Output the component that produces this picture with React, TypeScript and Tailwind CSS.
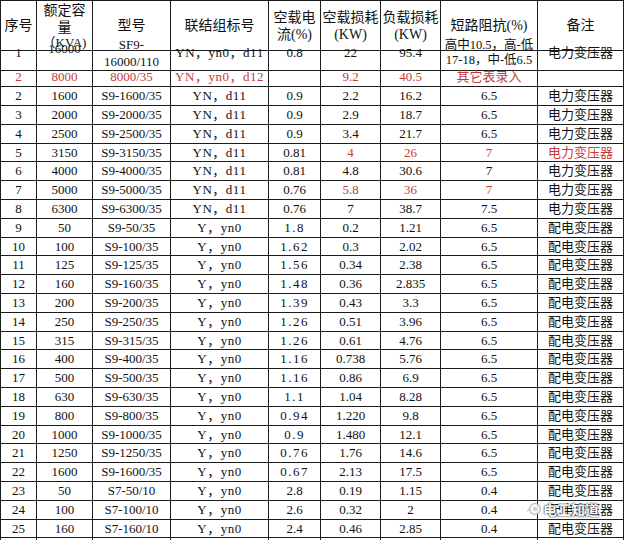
import type { ReactNode } from "react";

const GRID =
  "grid grid-cols-[36px_56px_78px_98px_52px_60px_60px_97px_86px]";
const CELL =
  "flex items-center justify-center whitespace-nowrap border-r border-b border-[#1c1c1c]";
const RED = "text-[#c83a3a]";

type Row = {
  cells: string[];
  red?: number[];
  wide?: boolean;
};

const D = "电力变压器";
const P = "配电变压器";

const rows: Row[] = [
  { cells: ["2", "8000", "8000/35", "YN，yn0，d12", "", "9.2", "40.5", "其它表录入", ""], red: [0, 1, 2, 3, 5, 6, 7] },
  { cells: ["2", "1600", "S9-1600/35", "YN，d11", "0.9", "2.2", "16.2", "6.5", D] },
  { cells: ["3", "2000", "S9-2000/35", "YN，d11", "0.9", "2.9", "18.7", "6.5", D] },
  { cells: ["4", "2500", "S9-2500/35", "YN，d11", "0.9", "3.4", "21.7", "6.5", D] },
  { cells: ["5", "3150", "S9-3150/35", "YN，d11", "0.81", "4", "26", "7", D], red: [5, 6, 7, 8] },
  { cells: ["6", "4000", "S9-4000/35", "YN，d11", "0.81", "4.8", "30.6", "7", D] },
  { cells: ["7", "5000", "S9-5000/35", "YN，d11", "0.76", "5.8", "36", "7", D], red: [5, 6, 7] },
  { cells: ["8", "6300", "S9-6300/35", "YN，d11", "0.76", "7", "38.7", "7.5", D] },
  { cells: ["9", "50", "S9-50/35", "Y，yn0", "1.8", "0.2", "1.21", "6.5", P], wide: true },
  { cells: ["10", "100", "S9-100/35", "Y，yn0", "1.62", "0.3", "2.02", "6.5", P], wide: true },
  { cells: ["11", "125", "S9-125/35", "Y，yn0", "1.56", "0.34", "2.38", "6.5", P], wide: true },
  { cells: ["12", "160", "S9-160/35", "Y，yn0", "1.48", "0.36", "2.835", "6.5", P], wide: true },
  { cells: ["13", "200", "S9-200/35", "Y，yn0", "1.39", "0.43", "3.3", "6.5", P], wide: true },
  { cells: ["14", "250", "S9-250/35", "Y，yn0", "1.26", "0.51", "3.96", "6.5", P], wide: true },
  { cells: ["15", "315", "S9-315/35", "Y，yn0", "1.26", "0.61", "4.76", "6.5", P], wide: true },
  { cells: ["16", "400", "S9-400/35", "Y，yn0", "1.16", "0.738", "5.76", "6.5", P], wide: true },
  { cells: ["17", "500", "S9-500/35", "Y，yn0", "1.16", "0.86", "6.9", "6.5", P], wide: true },
  { cells: ["18", "630", "S9-630/35", "Y，yn0", "1.1", "1.04", "8.28", "6.5", P], wide: true },
  { cells: ["19", "800", "S9-800/35", "Y，yn0", "0.94", "1.220", "9.8", "6.5", P], wide: true },
  { cells: ["20", "1000", "S9-1000/35", "Y，yn0", "0.9", "1.480", "12.1", "6.5", P], wide: true },
  { cells: ["21", "1250", "S9-1250/35", "Y，yn0", "0.76", "1.76", "14.6", "6.5", P], wide: true },
  { cells: ["22", "1600", "S9-1600/35", "Y，yn0", "0.67", "2.13", "17.5", "6.5", P], wide: true },
  { cells: ["23", "50", "S7-50/10", "Y，yn0", "2.8", "0.19", "1.15", "0.4", P] },
  { cells: ["24", "100", "S7-100/10", "Y，yn0", "2.6", "0.32", "2", "0.4", P] },
  { cells: ["25", "160", "S7-160/10", "Y，yn0", "2.4", "0.46", "2.85", "0.4", P] },
];

const Cell = ({ children, className = "" }: { children?: ReactNode; className?: string }) => (
  <div className={`${CELL} ${className}`}>{children}</div>
);

const App = () => {
  return (
    <div className="relative h-[540px] w-[625px] overflow-hidden bg-white font-['Liberation_Serif','Noto_Sans_CJK_SC',serif] text-[#111]">
      <div className="w-[624px] border-l border-t border-[#1c1c1c]">
        {/* header */}
        <div className={`${GRID} h-[35px] text-[14px] leading-[16px]`}>
          <Cell>序号</Cell>
          <div className="relative z-10 flex flex-col items-center justify-start whitespace-nowrap border-r border-b border-[#1c1c1c] pt-[1px] leading-[17px]">
            <span>额定容</span>
            <span>量</span>
            <span className="text-[13px] leading-[14px]">（KVA)</span>
          </div>
          <Cell>型号</Cell>
          <Cell>联结组标号</Cell>
          <Cell className="flex-col leading-[17px]">
            <span>空载电</span>
            <span>流(%)</span>
          </Cell>
          <Cell className="flex-col leading-[17px]">
            <span>空载损耗</span>
            <span>(KW)</span>
          </Cell>
          <Cell className="flex-col leading-[17px]">
            <span>负载损耗</span>
            <span>(KW)</span>
          </Cell>
          <Cell>短路阻抗(%)</Cell>
          <Cell>备注</Cell>
        </div>

        {/* row 1 */}
        <div className={`${GRID} h-[32px] text-[13px]`}>
          <Cell>1</Cell>
          <Cell className="pb-[8px]">16000</Cell>
          <Cell className="flex-col leading-[17px]">
            <span>SF9-</span>
            <span>16000/110</span>
          </Cell>
          <Cell className="tracking-[0.5px]">YN，yn0，d11</Cell>
          <Cell>0.8</Cell>
          <Cell>22</Cell>
          <Cell>95.4</Cell>
          <Cell className="flex-col text-[12.5px] leading-[15px]">
            <span>高中10.5，高-低</span>
            <span>17-18，中-低6.5</span>
          </Cell>
          <Cell>电力变压器</Cell>
        </div>

        {rows.map((row, i) => (
          <div
            key={i}
            className={`${GRID} ${i % 5 === 4 ? "h-[18px]" : "h-[19px]"} text-[13px] leading-[16px]`}
          >
            {row.cells.map((c, j) => {
              const red = row.red?.includes(j) ? RED : "";
              const extra =
                j === 3
                  ? "tracking-[0.5px]"
                  : j === 4 && row.wide
                    ? "tracking-[1.5px]"
                    : "";
              return (
                <Cell key={j} className={`${red} ${extra}`}>
                  {c}
                </Cell>
              );
            })}
          </div>
        ))}

        <div className={`${GRID} h-[19px]`}>
          {Array.from({ length: 9 }).map((_, j) => (
            <Cell key={j} />
          ))}
        </div>
      </div>

      {/* watermark */}
      <div className="pointer-events-none absolute left-[526px] top-[502px] flex items-center gap-[1px] opacity-90">
        <svg width="16" height="14" viewBox="0 0 16 14" fill="none">
          <path d="M1 9 L4 7" stroke="#9a9a9a" strokeWidth="1" />
          <circle cx="9" cy="7" r="5.5" stroke="#b0b0b0" strokeWidth="1.2" fill="#f4f4f4" />
          <circle cx="9" cy="7" r="2" fill="#c8c8c8" />
        </svg>
        <span className="font-['Noto_Sans_CJK_SC',sans-serif] text-[14px] font-bold leading-none text-white [text-shadow:0_0_1px_#333,0_0_1px_#333,0_0_2px_#555]">
          电工知道
        </span>
      </div>
    </div>
  );
};

export default App;
